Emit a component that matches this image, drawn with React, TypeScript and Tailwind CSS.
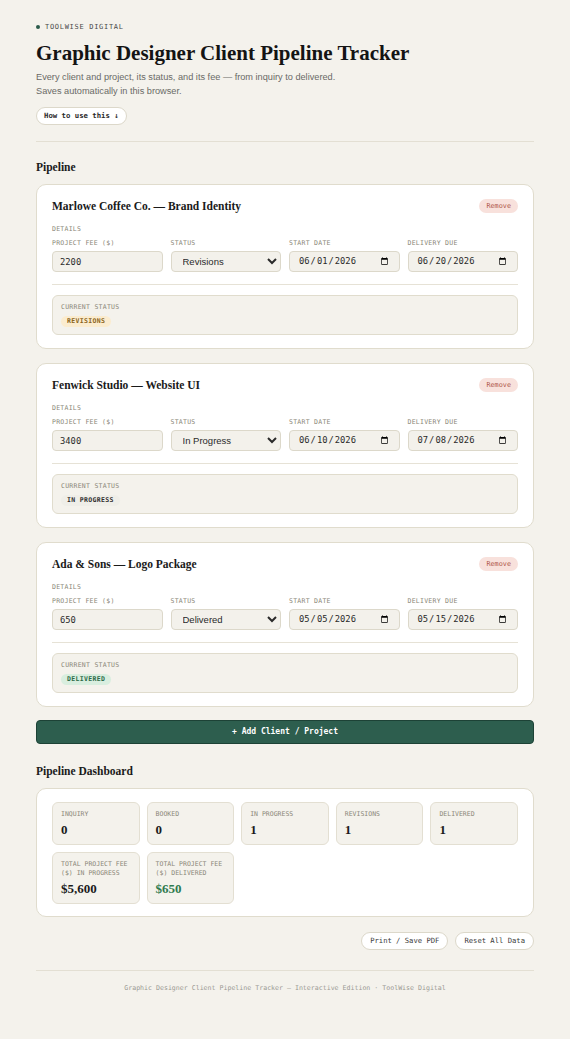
import React from "react";

const mono = { fontFamily: '"DejaVu Sans Mono", "Liberation Mono", monospace' };
const serif = { fontFamily: '"Liberation Serif", "Times New Roman", serif' };
const sans = { fontFamily: '"Liberation Sans", Arial, sans-serif' };

type Project = {
  title: string;
  fee: string;
  status: string;
  start: string;
  due: string;
  badge: string;
};

const projects: Project[] = [
  { title: "Marlowe Coffee Co. — Brand Identity", fee: "2200", status: "Revisions", start: "2026-06-01", due: "2026-06-20", badge: "revisions" },
  { title: "Fenwick Studio — Website UI", fee: "3400", status: "In Progress", start: "2026-06-10", due: "2026-07-08", badge: "progress" },
  { title: "Ada & Sons — Logo Package", fee: "650", status: "Delivered", start: "2026-05-05", due: "2026-05-15", badge: "delivered" },
];

function Badge({ kind, label }: { kind: string; label: string }) {
  const cls =
    kind === "revisions"
      ? "bg-[#fbeccf] text-[#8a6420]"
      : kind === "delivered"
      ? "bg-[#d9eedf] text-[#2c6a47]"
      : "bg-[#efeee8] text-[#2f2f2f]";
  return (
    <span className={`inline-flex h-[11px] items-center rounded-full px-[6px] text-[6.5px] font-bold leading-none tracking-[0.05em] ${cls}`} style={mono}>
      {label}
    </span>
  );
}

function Label({ children }: { children: React.ReactNode }) {
  return (
    <div className="text-[6.5px] tracking-[0.04em] text-[#8b8778] leading-[7px]" style={mono}>
      {children}
    </div>
  );
}

const field = "block h-[21px] w-full rounded-[4px] border border-[#dcd8ca] bg-[#f3f1eb] text-[#2a2a2a] outline-none";

function Card({ p }: { p: Project }) {
  return (
    <div className="rounded-[10px] border border-[#e0dccd] bg-white px-[15px] pt-[13px] pb-[13px]">
      <div className="flex items-center justify-between h-[16px]">
        <div className="text-[11.5px] font-bold leading-[16px] text-[#1a1a1a]" style={serif}>{p.title}</div>
        <button className="rounded-full bg-[#f8e1dc] px-[7px] h-[14px] text-[6.8px] leading-none text-[#b0584b]" style={mono}>Remove</button>
      </div>
      <div className="mt-[12px]"><Label>DETAILS</Label></div>
      <div className="mt-[7px] grid grid-cols-4 gap-x-[8px]">
        {[
          ["PROJECT FEE ($)", "fee"],
          ["STATUS", "status"],
          ["START DATE", "start"],
          ["DELIVERY DUE", "due"],
        ].map(([l, k]) => (
          <div key={k} className="flex flex-col">
            <Label>{l}</Label>
            <div className="mt-[4px]">
              {k === "fee" && (
                <input defaultValue={p.fee} className={`${field} px-[7px] text-[8.8px]`} style={mono} />
              )}
              {k === "status" && (
                <select defaultValue={p.status} className={`${field} px-[7px] text-[9.5px]`} style={sans}>
                  <option>Inquiry</option>
                  <option>Booked</option>
                  <option>In Progress</option>
                  <option>Revisions</option>
                  <option>Delivered</option>
                </select>
              )}
              {(k === "start" || k === "due") && (
                <input
                  type="date"
                  defaultValue={k === "start" ? p.start : p.due}
                  className={`${field} px-[8px] text-[8.8px]`}
                  style={mono}
                />
              )}
            </div>
          </div>
        ))}
      </div>
      <div className="mt-[12px] h-px bg-[#e6e2d6]" />
      <div className="mt-[10px] rounded-[6px] border border-[#e0dccd] bg-[#f4f2ec] px-[8px] pt-[8px] pb-[7px]">
        <Label>CURRENT STATUS</Label>
        <div className="mt-[5px] flex">
          <Badge kind={p.badge} label={p.status.toUpperCase()} />
        </div>
      </div>
    </div>
  );
}

function Stat({ label, value, green }: { label: React.ReactNode; value: string; green?: boolean }) {
  return (
    <div className="rounded-[6px] border border-[#e3dfd2] bg-[#f4f2ec] px-[8px] pt-[7px] pb-[6px]">
      <div className="text-[6.5px] leading-[9px] text-[#8b8778]" style={mono}>{label}</div>
      <div className={`mt-[3px] text-[13px] font-bold leading-[16px] ${green ? "text-[#2f7a4e]" : "text-[#1a1a1a]"}`} style={serif}>
        {value}
      </div>
    </div>
  );
}

export default function App() {
  return (
    <div className="min-h-screen bg-[#f4f2ec]" style={sans}>
      <div className="px-[36px] pt-[22px] pb-[40px]">
        <div className="flex items-center gap-[5px]">
          <span className="h-[4px] w-[4px] rounded-full bg-[#2b5b4b]" />
          <span className="text-[7px] leading-[10px] tracking-[0.1em] text-[#4a4a4a]" style={mono}>TOOLWISE DIGITAL</span>
        </div>
        <h1 className="mt-[8px] text-[21px] font-bold leading-[26px] text-[#141414]" style={serif}>
          Graphic Designer Client Pipeline Tracker
        </h1>
        <p className="mt-[4px] text-[9.2px] leading-[14px] text-[#6a6a66]">
          Every client and project, its status, and its fee — from inquiry to delivered.
          <br />
          Saves automatically in this browser.
        </p>
        <button
          className="mt-[9px] block h-[18px] rounded-full border border-[#dcd8ca] bg-white px-[7px] text-[7.3px] font-bold leading-none text-[#2a2a2a]"
          style={mono}
        >
          How to use this ↓
        </button>
        <div className="mt-[16px] h-px bg-[#e3dfd3]" />

        <h2 className="mt-[18px] text-[11.5px] font-bold leading-[14px] text-[#1a1a1a]" style={serif}>Pipeline</h2>
        <div className="mt-[10px] flex flex-col gap-[14px]">
          {projects.map((p) => (
            <Card key={p.title} p={p} />
          ))}
        </div>

        <button
          className="mt-[13px] block h-[24px] w-full rounded-[4px] border border-[#1d4236] bg-[#2d5e4e] text-[8px] font-bold leading-none text-white"
          style={mono}
        >
          + Add Client / Project
        </button>

        <h2 className="mt-[20px] text-[11.5px] font-bold leading-[14px] text-[#1a1a1a]" style={serif}>Pipeline Dashboard</h2>
        <div className="mt-[10px] rounded-[10px] border border-[#e0dccd] bg-white px-[15px] pt-[13px] pb-[12px]">
          <div className="grid grid-cols-5 gap-x-[7px] gap-y-[7px]">
            <Stat label="INQUIRY" value="0" />
            <Stat label="BOOKED" value="0" />
            <Stat label="IN PROGRESS" value="1" />
            <Stat label="REVISIONS" value="1" />
            <Stat label="DELIVERED" value="1" />
            <Stat label={<>TOTAL PROJECT FEE<br />($) IN PROGRESS</>} value="$5,600" />
            <Stat label={<>TOTAL PROJECT FEE<br />($) DELIVERED</>} value="$650" green />
          </div>
        </div>

        <div className="mt-[15px] flex justify-end gap-[7px]">
          <button className="h-[18px] rounded-full border border-[#dcd8ca] bg-white px-[8px] text-[7.2px] leading-none text-[#3a3a3a]" style={mono}>
            Print / Save PDF
          </button>
          <button className="h-[18px] rounded-full border border-[#dcd8ca] bg-white px-[8px] text-[7.2px] leading-none text-[#3a3a3a]" style={mono}>
            Reset All Data
          </button>
        </div>

        <div className="mt-[20px] h-px bg-[#e3dfd3]" />
        <div className="mt-[12px] text-center text-[6.6px] leading-[10px] text-[#9b9a94]" style={mono}>
          Graphic Designer Client Pipeline Tracker — Interactive Edition · ToolWise Digital
        </div>
      </div>
    </div>
  );
}
